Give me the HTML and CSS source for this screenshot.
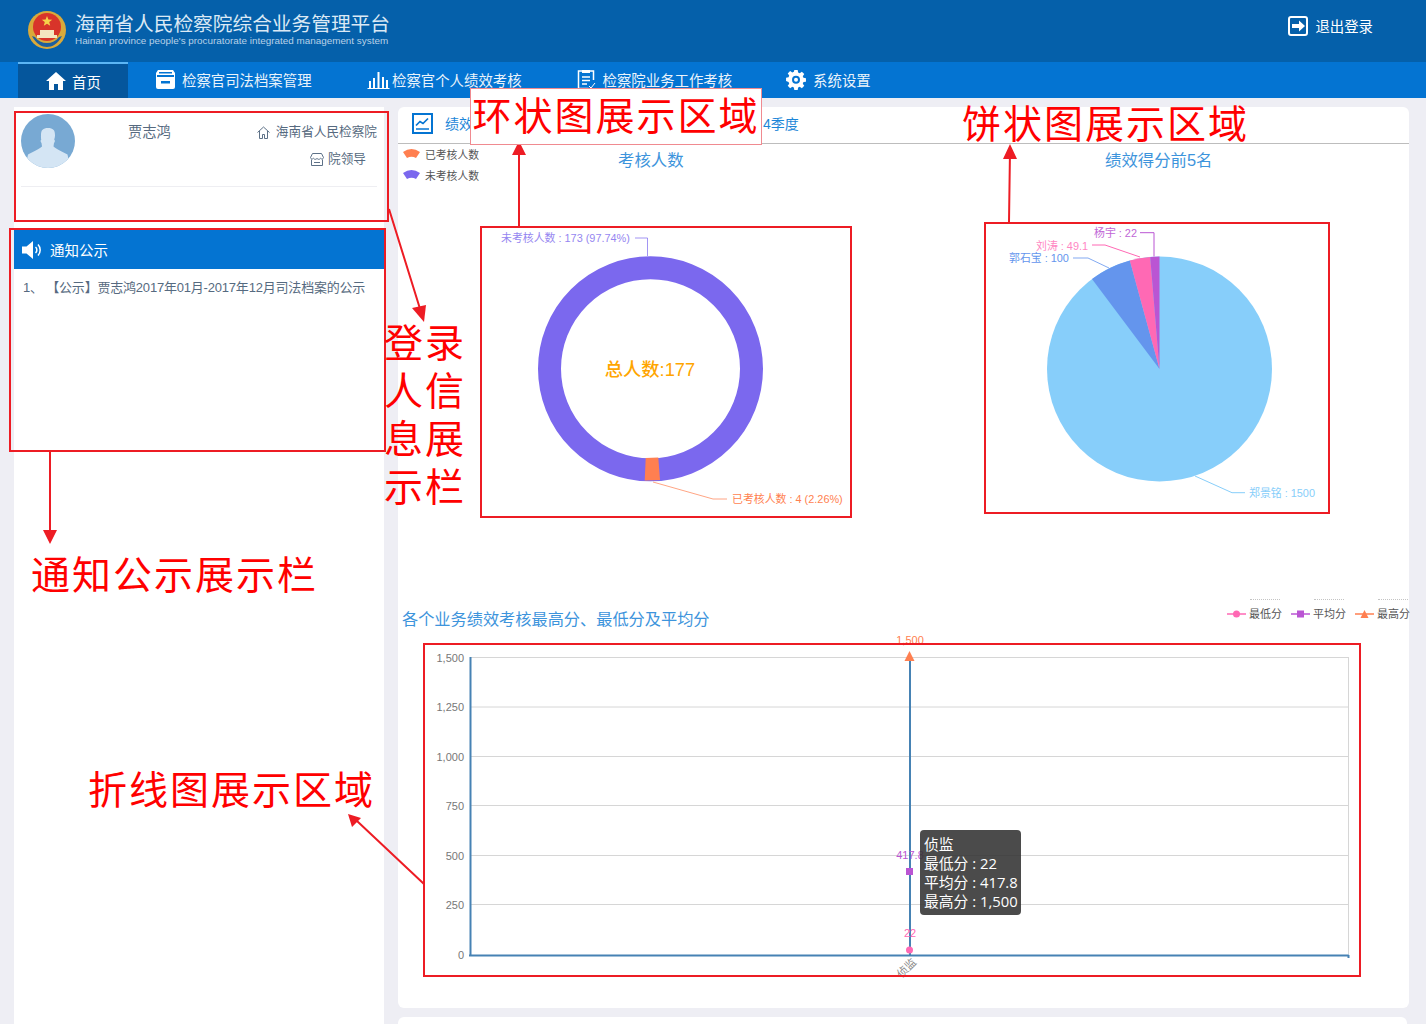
FILE: index.html
```html
<!DOCTYPE html>
<html lang="zh-CN">
<head>
<meta charset="utf-8">
<title>海南省人民检察院综合业务管理平台</title>
<link rel="stylesheet" href="styles.css">
</head>
<body>
<header class="top">
  <div class="brand">
    <svg class="emblem" width="40" height="40" viewBox="0 0 40 40">
      <circle cx="20" cy="20" r="19" fill="#d9a93a"/>
      <circle cx="20" cy="17" r="14" fill="#d8342a"/>
      <path d="M10 25h20v3H10zM13 20h14v5H13z" fill="#f4e6c0"/>
      <path d="M20 6l1.400 3.600 3.800.1-3 2.400 1 3.700-3.200-2.100-3.200 2.100 1-3.700-3-2.400 3.800-.1z" fill="#f6d24a"/>
      <path d="M5 26c4 8 10 11 15 11s11-3 15-11l-3 1c-3 4-7 6-12 6s-9-2-12-6z" fill="#1d5f9e"/>
    </svg>
    <div class="brand-text">
      <div class="brand-cn">海南省人民检察院综合业务管理平台</div>
      <div class="brand-en">Hainan province people's procuratorate integrated management system</div>
    </div>
  </div>
  <a class="logout">
    <svg width="20" height="20" viewBox="0 0 20 20"><rect x="1" y="1" width="18" height="18" rx="2" fill="none" stroke="#fff" stroke-width="2"/><path d="M4 8h7V4.500l6 5.500-6 5.500V12H4z" fill="#fff"/></svg>
    <span>退出登录</span>
  </a>
</header>
<nav class="nav">
  <a class="nav-item home">
    <svg width="20" height="18" viewBox="0 0 20 18"><path d="M10 0l10 9h-3v9h-5v-6H8v6H3V9H0z" fill="#fff"/></svg>
    <span>首页</span>
  </a>
  <a class="nav-item archive">
    <svg width="19" height="19" viewBox="0 0 19 19"><path d="M2 0h15l2 3v14a2 2 0 0 1-2 2H2a2 2 0 0 1-2-2V3z" fill="#fff"/><path d="M1 5.500h17M1 6.500h17" stroke="#0474d2"/><rect x="5" y="11" width="9" height="2.500" fill="#0474d2"/><rect x="3" y="2" width="13" height="1.500" fill="#0474d2"/></svg>
    <span>检察官司法档案管理</span>
  </a>
  <a class="nav-item personal">
    <svg width="23" height="18" viewBox="0 0 23 18"><path d="M.5 17.500h22" stroke="#fff"/><path d="M2 10h2v7H2zM6 7h2v10H6zM10.500 1h2v16h-2zM15 6h2v11h-2zM19 9h2v8h-2z" fill="#fff"/></svg>
    <span>检察官个人绩效考核</span>
  </a>
  <a class="nav-item work">
    <svg width="20" height="21" viewBox="0 0 20 21"><path d="M5 2H1.500v17.500h10M13 2h3.500v9" fill="none" stroke="#fff" stroke-width="1.500"/><path d="M5 1h8v3H5z" fill="#fff"/><path d="M5 8h8M5 11.500h8M5 15h5" stroke="#fff" stroke-width="1.500"/><path d="M12 17l2 2 4-5" fill="none" stroke="#fff"/></svg>
    <span>检察院业务工作考核</span>
  </a>
  <a class="nav-item settings">
    <svg width="20" height="20" viewBox="0 0 20 20"><path d="M8.200 0h3.600l.5 2.700 1.700.7 2.300-1.600 2.600 2.600-1.600 2.300.7 1.700 2.700.5v3.600l-2.700.5-.7 1.700 1.600 2.300-2.600 2.600-2.300-1.600-1.700.7-.5 2.700H8.200l-.5-2.700-1.700-.7-2.300 1.600-2.600-2.600 1.600-2.300-.7-1.700L-.7 11.800V8.200l2.700-.5.700-1.700-1.600-2.300 2.600-2.600L6 2.700l1.700-.7z" transform="translate(.7 0) scale(.93)" fill="#fff"/><circle cx="10" cy="9.800" r="4" fill="#0474d2"/><circle cx="10" cy="9.800" r="2" fill="#fff"/></svg>
    <span>系统设置</span>
  </a>
</nav>
<main class="main">
  <aside class="side">
    <section class="user">
      <div class="user-top">
        <svg class="avatar" width="54" height="54" viewBox="0 0 54 54">
          <defs><clipPath id="av"><circle cx="27" cy="27" r="27"/></clipPath></defs>
          <circle cx="27" cy="27" r="27" fill="#78a9d3"/>
          <path clip-path="url(#av)" d="M20 21c0-5 2-7 7-7s7 2 7 7c0 2-.3 3-.8 4.500 1 .8.900 2.500-.2 3.500l-.5 3.500c3 3 9 5 14 8l3 14H4l3-14c5-3 11-5 14-8l-.5-3.500c-1.100-1-1.200-2.700-.2-3.500-.5-1.500-.3-2.500-.3-4.500z" fill="#d4e5f4"/>
        </svg>
        <div class="user-name">贾志鸿</div>
        <div class="user-meta">
          <div class="meta-row">
            <svg width="13" height="13" viewBox="0 0 13 13"><path d="M.5 6.500L6.500 1l6 5.500M2.500 5v7.500h3V8.500h2v4h3V5" fill="none" stroke="#5d7187"/></svg>
            <span>海南省人民检察院</span>
          </div>
          <div class="meta-row second">
            <svg width="14" height="13" viewBox="0 0 14 13"><path d="M2.500.5h9l2 4c0 1.500-2 2-3 .8-1 1.400-2.500 1.400-3.500 0-1 1.400-2.500 1.400-3.500 0-1 1.200-3 .7-3-.8zM1.500 6.500v6h11v-6M4 9.500h6" fill="none" stroke="#5d7187"/></svg>
            <span>院领导</span>
          </div>
        </div>
      </div>
    </section>
    <section class="notice">
      <div class="notice-head">
        <svg width="21" height="20" viewBox="0 0 21 20"><path d="M0 6.500h4.500L11 1v18l-6.500-5.500H0z" fill="#fff"/><path d="M13.500 7a4 4 0 0 1 0 6M16 4.500a8 8 0 0 1 0 11" fill="none" stroke="#fff" stroke-width="1.500"/></svg>
        <span>通知公示</span>
      </div>
      <p class="notice-line">1、 【公示】贾志鸿2017年01月-2017年12月司法档案的公示</p>
    </section>
  </aside>
  <div class="content">
    <section class="panel">
      <div class="tabs">
        <svg class="tab-ico" width="21" height="21" viewBox="0 0 21 21"><rect x="1" y="1" width="19" height="19" fill="none" stroke="#0474d2" stroke-width="2"/><path d="M4 12.500l4-4 3 2 5-5" fill="none" stroke="#0474d2" stroke-width="1.700"/><path d="M4 16h13" stroke="#0474d2" stroke-width="1.500"/></svg>
        <span class="tab-text">绩效</span>
        <span class="tab-quarter">4季度</span>
      </div>
      <div class="charts">
        <div class="legend-col">
          <div class="legend-row"><svg width="17" height="9" viewBox="0 0 17 9"><path d="M0 3Q8.500-3 17 3L13 9Q8.500 6.500 4 9Z" fill="#ff7f50"/></svg>已考核人数</div>
          <div class="legend-row"><svg width="17" height="9" viewBox="0 0 17 9"><path d="M0 3Q8.500-3 17 3L13 9Q8.500 6.500 4 9Z" fill="#7b68ee"/></svg>未考核人数</div>
        </div>
        <h3 class="chart-title ring-title">考核人数</h3>
        <h3 class="chart-title pie-title">绩效得分前5名</h3>
        <svg class="chart-svg" width="1011" height="456" viewBox="0 0 1011 456">
          <circle cx="252.500" cy="224.800" r="101" fill="none" stroke="#7b68ee" stroke-width="23"/>
          <path d="M247.700 314L260.300 313.500 262 336 246.700 336.500Z" fill="#ff7f50"/>
          <path d="M237 94h12.500v18" class="lead" stroke="#7b68ee" opacity=".7"/>
          <path d="M255 338L315 355h14" class="lead" stroke="#ff7f50" opacity=".7"/>
          <text x="103" y="98" class="lab" fill="#7b68ee" opacity=".8">未考核人数 : 173 (97.74%)</text>
          <text x="334" y="359" class="lab" fill="#ff7f50">已考核人数 : 4 (2.26%)</text>
          <text x="252" y="232" class="total">总人数:177</text>
          <circle cx="761.500" cy="225" r="112.500" fill="#87cefa"/>
          <path d="M761.500 225L694 135A112.500 112.500 0 0 1 731.800 116.500Z" fill="#6495ed"/>
          <path d="M761.500 225L731.800 116.500A112.500 112.500 0 0 1 752.200 112.900Z" fill="#ff69b4"/>
          <path d="M761.500 225L752.200 112.900A112.500 112.500 0 0 1 761.500 112.500Z" fill="#ba55d3"/>
          <path d="M756 112.500V88.700h-14" class="lead" stroke="#ba55d3"/>
          <path d="M742 113L707 101h-13" class="lead" stroke="#ff69b4"/>
          <path d="M711 124L690 114h-15" class="lead" stroke="#6495ed" opacity=".8"/>
          <path d="M797 332L834 348.700h13" class="lead" stroke="#87cefa"/>
          <text x="696" y="93" class="lab" fill="#ba55d3" opacity=".9">杨宇 : 22</text>
          <text x="638" y="106" class="lab" fill="#ff69b4" opacity=".8">刘涛 : 49.1</text>
          <text x="611" y="118" class="lab" fill="#6495ed">郭石宝 : 100</text>
          <text x="851" y="353" class="lab" fill="#87cefa">郑景铭 : 1500</text>
        </svg>
      </div>
      <div class="line-head">
        <span class="ghost g1"></span><span class="ghost g2"></span><span class="ghost g3"></span>
        <h3 class="line-title">各个业务绩效考核最高分、最低分及平均分</h3>
        <div class="line-legend">
          <span class="ll"><svg width="19" height="8" viewBox="0 0 19 8"><path d="M0 4h19" stroke="#ff69b4"  stroke-width="1.500"/><circle cx="9.500" cy="4" r="3.500" fill="#ff69b4"/></svg>最低分</span>
          <span class="ll"><svg width="19" height="8" viewBox="0 0 19 8"><path d="M0 4h19" stroke="#ba55d3" stroke-width="1.500"/><rect x="6" y=".5" width="7" height="7" fill="#ba55d3"/></svg>平均分</span>
          <span class="ll"><svg width="19" height="8" viewBox="0 0 19 8"><path d="M0 4h19" stroke="#ff7f50" stroke-width="1.500"/><path d="M9.500 0l4 8h-8z" fill="#ff7f50"/></svg>最高分</span>
        </div>
      </div>
      <svg class="line-svg" width="1011" height="378" viewBox="0 0 1011 378">
        <g class="grid">
          <path d="M72 27.500h879M72 77h879M72 126.500h879M72 175.500h879M72 225.500h879M72 274.500h879"/>
          <path d="M950.500 27v297"/>
        </g>
        <g class="ticks">
          <text x="66" y="32">1,500</text>
          <text x="66" y="81">1,250</text>
          <text x="66" y="131">1,000</text>
          <text x="66" y="180">750</text>
          <text x="66" y="230">500</text>
          <text x="66" y="279">250</text>
          <text x="66" y="329">0</text>
        </g>
        <path d="M72.500 27v298M71 325.500h880M512 27v298M950.500 325v3" class="axis"/>
        <path d="M511.500 21l5 10h-10z" fill="#ff7f50"/>
        <rect x="508" y="238" width="7" height="7" fill="#ba55d3"/>
        <circle cx="511.500" cy="320" r="3.500" fill="#ff69b4"/>
        <text x="512" y="14" class="pt" fill="#ff7f50">1,500</text>
        <text x="512" y="229" class="pt" fill="#ba55d3">417.8</text>
        <text x="512" y="307" class="pt" fill="#ff69b4">22</text>
        <text x="519" y="333" class="cat" transform="rotate(-45 519 333)">侦监</text>
      </svg>
      <div class="tip">
        <div>侦监</div>
        <div>最低分 : 22</div>
        <div>平均分 : 417.8</div>
        <div>最高分 : 1,500</div>
      </div>
    </section>
    <section class="next-panel"></section>
  </div>
</main>

<svg class="marks" width="1426" height="1024" viewBox="0 0 1426 1024">
  <g class="box">
    <rect x="15" y="112" width="373" height="109"/>
    <rect x="10" y="229" width="375" height="222"/>
    <rect x="481" y="227" width="370" height="290"/>
    <rect x="985" y="223" width="344" height="290"/>
    <rect x="424" y="644" width="936" height="332"/>
    <path d="M389 209L421 312M50 451v80M519 227V150M1009 222l1-72M424 884L357 821"/>
  </g>
  <g class="head">
    <path d="M412 308L426 305 424 322Z"/>
    <path d="M43 530h14l-7 14zM512 155h14l-7-14zM1003 159h14l-7-15zM348 814l13 4-9 9z"/>
  </g>
</svg>
<div class="ring-label">环状图展示区域</div>
<div class="note n-pie">饼状图展示区域</div>
<div class="note n-login">登录<br>人信<br>息展<br>示栏</div>
<div class="note n-notice">通知公示展示栏</div>
<div class="note n-line">折线图展示区域</div>
</body>
</html>
```
FILE: styles.css
```css
* { box-sizing: border-box; }
html, body { margin: 0; padding: 0; }
body {
  width: 1426px;
  height: 1024px;
  overflow: hidden;
  position: relative;
  background: #eeeef4;
  font-family: "Liberation Sans", "Noto Sans CJK SC", sans-serif;
  color: #566a80;
}
.top {
  height: 62px;
  background: #0560aa;
  display: flex;
  align-items: flex-start;
  justify-content: space-between;
  padding: 10px 53px 0 27px;
}
.brand { display: flex; align-items: flex-start; gap: 8px; }
.brand-cn { color: #dbe9f5; font-size: 19.700px; line-height: 24px; margin-top: 2px; }
.brand-en { color: #b8d1e8; font-size: 9.900px; line-height: 11px; margin-top: -1px; white-space: nowrap; }
.logout { display: flex; align-items: center; gap: 7px; color: #fff; font-size: 14.400px; margin-top: 5px; }
.nav {
  height: 36px;
  background: #0474d2;
  padding-left: 18px;
  display: flex;
  align-items: stretch;
}
.nav-item { display: flex; align-items: center; color: #eaf3fb; font-size: 14.400px; gap: 7px; padding-bottom: 1px; white-space: nowrap; }
.home {
  width: 110px;
  background: #05569c;
  border-top: 2px solid #5cb6f5;
  color: #fff;
  padding-left: 28px;
  padding-bottom: 0;
  gap: 6px;
}
.archive { margin-left: 28px; gap: 7px; }
.personal { margin-left: 55px; gap: 2.500px; }
.work { margin-left: 55px; gap: 6px; }
.settings { margin-left: 54px; gap: 7px; }

.main {
  display: flex;
  align-items: flex-start;
  gap: 14px;
  padding: 9px 0 0 14px;
}
.side { width: 370px; height: 917px; background: #fff; display: flex; flex-direction: column; }
.user {
  height: 112px;
  background: #fff;
  border-radius: 6px 6px 0 0;
  padding: 7px 7px 0;
}
.user-top { display: flex; height: 73px; border-bottom: 1px solid #eeeef2; }
.avatar { flex: none; }
.user-name { margin-left: 53px; margin-top: 10px; font-size: 14.300px; line-height: 17px; }
.user-meta { margin-left: auto; font-size: 12.650px; display: flex; flex-direction: column; align-items: flex-end; padding-top: 10px; }
.meta-row { display: flex; align-items: center; gap: 6px; line-height: 17px; height: 17px; white-space: nowrap; }
.meta-row.second { margin-top: 10px; margin-right: 11px; gap: 4px; }
.notice { margin-top: 10px; }
.notice-head {
  height: 40px;
  background: #0474d2;
  display: flex;
  align-items: center;
  gap: 7px;
  padding: 1px 0 0 8px;
  color: #fff;
  font-size: 14.500px;
}
.notice-line { margin: 9px 0 0 9px; font-size: 13px; line-height: 20px; letter-spacing: -.2px; white-space: nowrap; }

.content { width: 1011px; display: flex; flex-direction: column; gap: 9px; }
.panel {
  position: relative;
  height: 901px;
  background: #fff;
  border-radius: 6px;
}
.next-panel { height: 20px; margin-right: 2px; background: #fff; border-radius: 6px 6px 0 0; }
.tabs {
  height: 37px;
  border-bottom: 1px solid #bdbdbd;
  display: flex;
  align-items: center;
  padding: 0 0 4px 14px;
  font-size: 14px;
  color: #1c86d8;
}
.tab-text { margin-left: 12px; }
.tab-quarter { margin-left: 290px; }
.charts { position: relative; height: 456px; }
.chart-svg { display: block; }
.legend-col { position: absolute; left: 5px; top: -1px; font-size: 10.800px; color: #555; }
.legend-row { display: flex; align-items: center; gap: 5px; height: 21px; white-space: nowrap; }
.chart-title { position: absolute; top: 6px; margin: 0; font-size: 16.400px; font-weight: 400; line-height: 20px; color: #3d94dc; }
.ring-title { left: 220px; }
.pie-title { left: 707px; }
.lab { font-size: 10.900px; }
.lead { fill: none; stroke-width: 1; }
.total { font-size: 18.300px; font-weight: 500; fill: #ffa500; text-anchor: middle; }
.line-head { position: relative; height: 30px; display: flex; justify-content: space-between; align-items: flex-start; padding-left: 4px; }
.ghost { position: absolute; top: -1px; height: 1px; border-top: 1px dotted #c4c4c4; width: 30px; }
.g1 { left: 852px; }
.g2 { left: 916px; }
.g3 { left: 980px; }
.line-title { margin: 9px 0 0; font-size: 16.200px; line-height: 20px; font-weight: 400; color: #3d94dc; white-space: nowrap; }
.line-legend { display: flex; gap: 9px; font-size: 11px; color: #555; margin: 7px -1px 0 0; }
.ll { display: flex; align-items: center; gap: 3px; line-height: 14px; white-space: nowrap; }
.line-svg { display: block; }
.grid path { fill: none; stroke: #d6d6d6; stroke-width: 1; }
.ticks text { font-size: 11px; fill: #777; text-anchor: end; }
.axis { fill: none; stroke: #4682b4; stroke-width: 2; }
.pt { font-size: 11px; text-anchor: middle; }
.cat { font-size: 11px; fill: #888; text-anchor: end; }
.tip {
  position: absolute;
  left: 522px;
  top: 723px;
  width: 101px;
  height: 85px;
  background: rgba(50, 50, 50, .88);
  border-radius: 4px;
  color: #fff;
  font-family: "Open Sans", "Noto Sans CJK SC", sans-serif;
  font-size: 14.800px;
  line-height: 19px;
  padding: 5px 4px;
  white-space: nowrap;
}
.marks { position: absolute; left: 0; top: 0; pointer-events: none; }
.box { fill: none; stroke: #ed1c24; stroke-width: 2; }
.head { fill: #ed1c24; }
.ring-label {
  position: absolute;
  left: 470px;
  top: 88px;
  width: 292px;
  height: 57px;
  background: #fff;
  border: 1px solid #f08a90;
  color: #f00;
  font-family: "Noto Sans CJK SC", sans-serif;
  font-size: 39px;
  line-height: 49px;
  text-align: center;
  white-space: nowrap;
  letter-spacing: 2px;
}
.note {
  position: absolute;
  color: #f00;
  font-family: "Noto Sans CJK SC", sans-serif;
  font-size: 39px;
  line-height: 48px;
  letter-spacing: 2px;
  white-space: nowrap;
}
.n-pie { left: 962px; top: 97px; }
.n-login { left: 384px; top: 316px; }
.n-notice { left: 31px; top: 548px; }
.n-line { left: 88px; top: 763px; }
```
